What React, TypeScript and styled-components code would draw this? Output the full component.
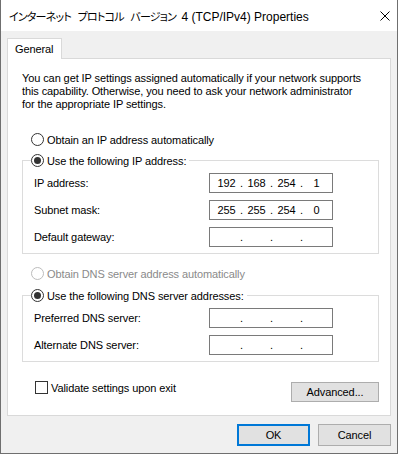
import React from "react";
import styled, { createGlobalStyle } from "styled-components";

const GlobalStyle = createGlobalStyle`
  html, body { margin: 0; padding: 0; background: #ffffff; }
  body {
    font-family: "Liberation Sans", Arial, sans-serif;
    font-size: 11px;
    letter-spacing: -0.1px;
    color: #000000;
  }
`;

const Window = styled.div`
  box-sizing: border-box;
  width: 398px;
  border: 1px solid #6f6f6f;
  border-top: none;
  background: #f0f0f0;
  display: flex;
  flex-direction: column;
`;

const TitleBar = styled.div`
  height: 31px;
  background: #ffffff;
  display: flex;
  align-items: center;
  justify-content: space-between;
  padding: 0 7px 0 8px;
`;

const TitleText = styled.span`
  font-family: "Liberation Sans", "Noto Sans CJK JP", sans-serif;
  font-size: 12px;
  letter-spacing: 0;
  white-space: nowrap;
  padding-top: 1px;
`;

const Kana = styled.span`
  font-family: "Noto Sans CJK JP", sans-serif;
  font-size: 11px;
  font-feature-settings: "palt";
  letter-spacing: -0.8px;
  word-spacing: 5px;
  margin-right: 2px;
`;

const CloseIcon = styled.svg`
  width: 10px;
  height: 10px;
  display: block;
`;

const Body = styled.div`
  padding: 7px 6px 7px 6px;
  display: flex;
  flex-direction: column;
`;

const TabStrip = styled.div`
  display: flex;
`;

const Tab = styled.div`
  position: relative;
  z-index: 1;
  box-sizing: border-box;
  height: 21px;
  margin-bottom: -1px;
  padding: 0 8px 1px 7px;
  display: flex;
  align-items: center;
  background: #ffffff;
  border: 1px solid #d9d9d9;
  border-bottom: none;
`;

const Panel = styled.div`
  background: #ffffff;
  border: 1px solid #d9d9d9;
  padding: 13px 11px 13px 14px;
  display: flex;
  flex-direction: column;
`;

const Description = styled.p`
  margin: 0;
  line-height: 13px;
`;

const OptionRow = styled.label<{ $top: number; $disabled?: boolean }>`
  display: flex;
  align-items: center;
  gap: 3px;
  height: 15px;
  margin-top: ${(p) => p.$top}px;
  padding-left: 9px;
  color: ${(p) => (p.$disabled ? "#8a8a8a" : "#000000")};
  white-space: nowrap;
`;

const Radio = styled.span<{ $checked?: boolean; $disabled?: boolean }>`
  box-sizing: border-box;
  width: 13px;
  height: 13px;
  border-radius: 50%;
  border: 1px solid ${(p) => (p.$disabled ? "#bcbcbc" : "#333333")};
  background: #ffffff;
  display: flex;
  align-items: center;
  justify-content: center;
  flex: none;
  &::after {
    content: "";
    width: 7px;
    height: 7px;
    border-radius: 50%;
    background: #333333;
    display: ${(p) => (p.$checked ? "block" : "none")};
  }
`;

const Group = styled.fieldset<{ $top: number }>`
  margin: ${(p) => p.$top}px 0 0 0;
  padding: 5px 11px 6px 11px;
  border: 1px solid #dcdcdc;
  min-width: 0;
`;

const Legend = styled.legend`
  margin-left: -3px;
  padding: 0 3px 0 0;
  height: 15px;
  display: flex;
  align-items: center;
  gap: 3px;
  white-space: nowrap;
`;

const FieldGrid = styled.div`
  display: grid;
  grid-template-columns: 175px 124px;
  row-gap: 7px;
  align-items: center;
`;

const FieldLabel = styled.span`
  white-space: nowrap;
`;

const IpBox = styled.div`
  box-sizing: border-box;
  width: 124px;
  height: 20px;
  border: 1px solid #7a7a7a;
  background: #ffffff;
  display: flex;
  align-items: center;
  padding: 0 2px 0 3px;
`;

const Octet = styled.span`
  width: 27px;
  text-align: center;
`;

const Dot = styled.span`
  width: 3px;
  text-align: center;
`;

const BottomRow = styled.div`
  margin-top: 19px;
  display: flex;
  justify-content: space-between;
  align-items: flex-start;
`;

const CheckRow = styled.label`
  display: flex;
  align-items: center;
  gap: 3px;
  height: 13px;
  padding-left: 13px;
  white-space: nowrap;
`;

const CheckBox = styled.span`
  box-sizing: border-box;
  width: 13px;
  height: 13px;
  border: 1px solid #333333;
  background: #ffffff;
  flex: none;
`;

const Button = styled.button<{ $width: number; $height: number; $default?: boolean }>`
  box-sizing: border-box;
  width: ${(p) => p.$width}px;
  height: ${(p) => p.$height}px;
  margin: 0;
  padding: 0;
  font-family: "Liberation Sans", Arial, sans-serif;
  font-size: 11px;
  letter-spacing: -0.1px;
  color: #000000;
  background: #e1e1e1;
  border: ${(p) => (p.$default ? "2px solid #0078d7" : "1px solid #adadad")};
  display: flex;
  align-items: center;
  justify-content: center;
`;

const AdvancedButton = styled(Button)`
  margin-top: 1px;
`;

const ButtonRow = styled.div`
  margin-top: 8px;
  display: flex;
  justify-content: flex-end;
  gap: 8px;
`;

function IpField({ octets }: { octets: string[] }) {
  return (
    <IpBox>
      <Octet>{octets[0]}</Octet>
      <Dot>.</Dot>
      <Octet>{octets[1]}</Octet>
      <Dot>.</Dot>
      <Octet>{octets[2]}</Octet>
      <Dot>.</Dot>
      <Octet>{octets[3]}</Octet>
    </IpBox>
  );
}

const empty = ["", "", "", ""];

export default function App() {
  return (
    <>
      <GlobalStyle />
      <Window>
        <TitleBar>
          <TitleText>
            <Kana>インターネット プロトコル バージョン</Kana> 4 (TCP/IPv4) Properties
          </TitleText>
          <CloseIcon viewBox="0 0 10 10">
            <path d="M0.5 0.5 L9.5 9.5 M9.5 0.5 L0.5 9.5" stroke="#000" strokeWidth="1" fill="none" />
          </CloseIcon>
        </TitleBar>
        <Body>
          <TabStrip>
            <Tab>General</Tab>
          </TabStrip>
          <Panel>
            <Description>
              You can get IP settings assigned automatically if your network supports
              <br />
              this capability. Otherwise, you need to ask your network administrator
              <br />
              for the appropriate IP settings.
            </Description>

            <OptionRow $top={21}>
              <Radio />
              Obtain an IP address automatically
            </OptionRow>

            <Group $top={6}>
              <Legend>
                <Radio $checked />
                Use the following IP address:
              </Legend>
              <FieldGrid>
                <FieldLabel>IP address:</FieldLabel>
                <IpField octets={["192", "168", "254", "1"]} />
                <FieldLabel>Subnet mask:</FieldLabel>
                <IpField octets={["255", "255", "254", "0"]} />
                <FieldLabel>Default gateway:</FieldLabel>
                <IpField octets={empty} />
              </FieldGrid>
            </Group>

            <OptionRow $top={12} $disabled>
              <Radio $disabled />
              Obtain DNS server address automatically
            </OptionRow>

            <Group $top={7}>
              <Legend>
                <Radio $checked />
                Use the following DNS server addresses:
              </Legend>
              <FieldGrid>
                <FieldLabel>Preferred DNS server:</FieldLabel>
                <IpField octets={empty} />
                <FieldLabel>Alternate DNS server:</FieldLabel>
                <IpField octets={empty} />
              </FieldGrid>
            </Group>

            <BottomRow>
              <CheckRow>
                <CheckBox />
                Validate settings upon exit
              </CheckRow>
              <AdvancedButton $width={88} $height={20}>
                Advanced...
              </AdvancedButton>
            </BottomRow>
          </Panel>
          <ButtonRow>
            <Button $width={73} $height={22} $default>
              OK
            </Button>
            <Button $width={73} $height={22}>
              Cancel
            </Button>
          </ButtonRow>
        </Body>
      </Window>
    </>
  );
}
